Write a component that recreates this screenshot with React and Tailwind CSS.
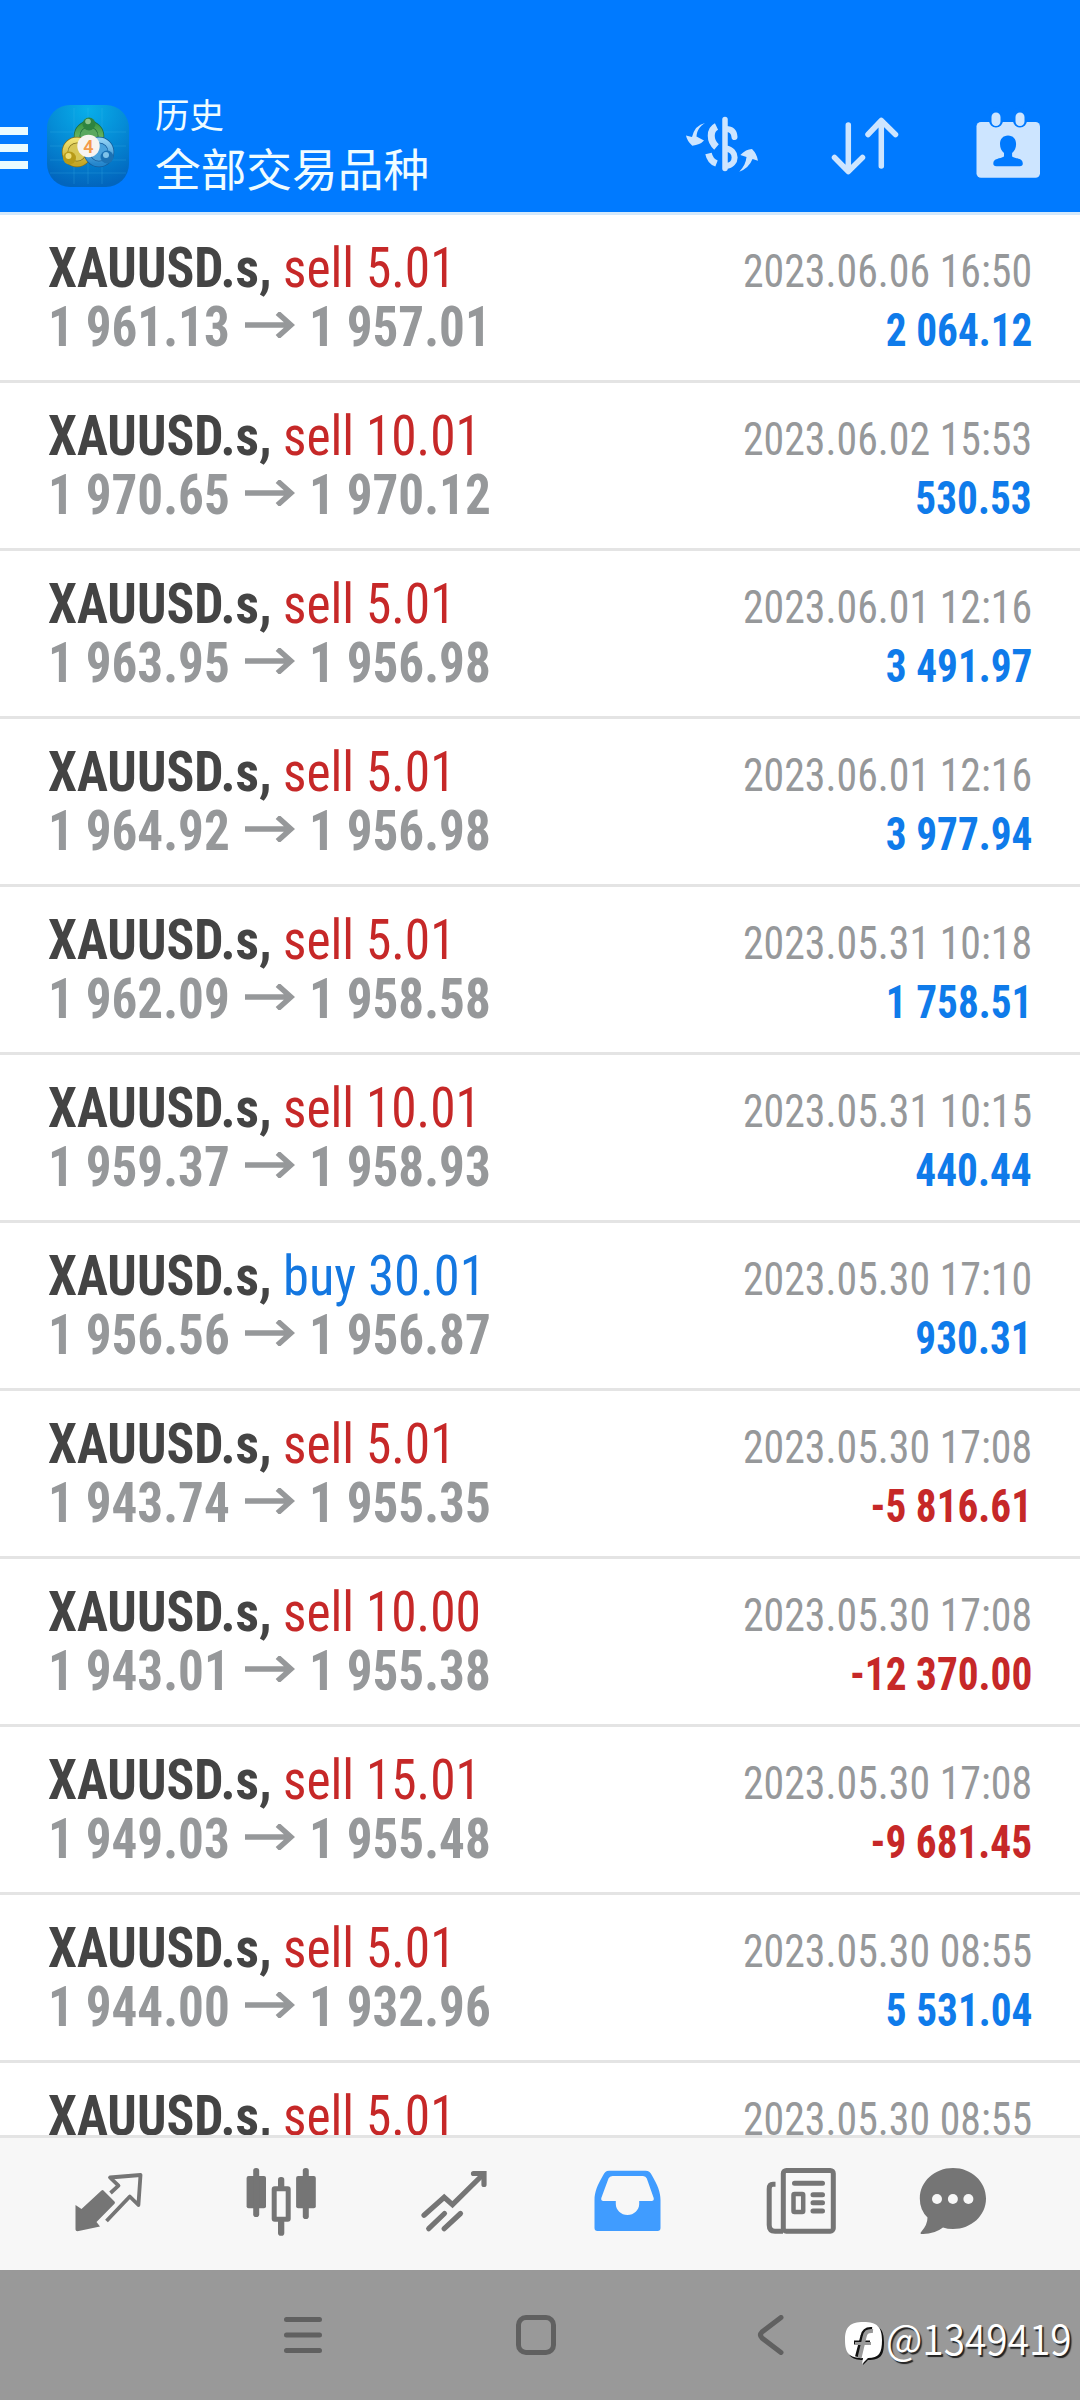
import React from 'react';

const deals = [
  { side: 'sell', volume: '5.01', open: '1 961.13', close: '1 957.01', time: '2023.06.06 16:50', profit: '2 064.12' },
  { side: 'sell', volume: '10.01', open: '1 970.65', close: '1 970.12', time: '2023.06.02 15:53', profit: '530.53' },
  { side: 'sell', volume: '5.01', open: '1 963.95', close: '1 956.98', time: '2023.06.01 12:16', profit: '3 491.97' },
  { side: 'sell', volume: '5.01', open: '1 964.92', close: '1 956.98', time: '2023.06.01 12:16', profit: '3 977.94' },
  { side: 'sell', volume: '5.01', open: '1 962.09', close: '1 958.58', time: '2023.05.31 10:18', profit: '1 758.51' },
  { side: 'sell', volume: '10.01', open: '1 959.37', close: '1 958.93', time: '2023.05.31 10:15', profit: '440.44' },
  { side: 'buy', volume: '30.01', open: '1 956.56', close: '1 956.87', time: '2023.05.30 17:10', profit: '930.31' },
  { side: 'sell', volume: '5.01', open: '1 943.74', close: '1 955.35', time: '2023.05.30 17:08', profit: '-5 816.61' },
  { side: 'sell', volume: '10.00', open: '1 943.01', close: '1 955.38', time: '2023.05.30 17:08', profit: '-12 370.00' },
  { side: 'sell', volume: '15.01', open: '1 949.03', close: '1 955.48', time: '2023.05.30 17:08', profit: '-9 681.45' },
  { side: 'sell', volume: '5.01', open: '1 944.00', close: '1 932.96', time: '2023.05.30 08:55', profit: '5 531.04' },
  { side: 'sell', volume: '5.01', open: '', close: '', time: '2023.05.30 08:55', profit: '' },
];

const AppLogo = () => (
  <svg viewBox="0 0 82 82" className="w-[82px] h-[82px]">
    <defs>
      <radialGradient id="tile" cx="50%" cy="5%" r="95%">
        <stop offset="0" stopColor="#08aeea" />
        <stop offset="0.5" stopColor="#058cd6" />
        <stop offset="1" stopColor="#0265bd" />
      </radialGradient>
      <linearGradient id="green" x1="0" y1="0" x2="0" y2="1">
        <stop offset="0" stopColor="#3d9a45" />
        <stop offset="1" stopColor="#8cc976" />
      </linearGradient>
      <linearGradient id="yellow" x1="0" y1="0" x2="0" y2="1">
        <stop offset="0" stopColor="#f0e272" />
        <stop offset="1" stopColor="#c4a626" />
      </linearGradient>
      <linearGradient id="blue" x1="0" y1="0" x2="0" y2="1">
        <stop offset="0" stopColor="#8fd0f3" />
        <stop offset="1" stopColor="#2586cc" />
      </linearGradient>
    </defs>
    <rect width="82" height="82" rx="23" fill="url(#tile)" />
    <path d="M27 3v76M41 3v76M55 3v76M3 27h76M3 41h76M3 55h76M3 68h76" stroke="#4cc0ee" strokeOpacity="0.28" strokeWidth="0.8" />
    <circle cx="42" cy="31" r="12" fill="#5aa860" stroke="#1d6a3c" strokeWidth="6.500" />
    <circle cx="42" cy="31" r="12" fill="none" stroke="url(#green)" strokeWidth="5" />
    <circle cx="30" cy="47" r="12" fill="#d8c654" stroke="#80711c" strokeWidth="6.500" />
    <circle cx="30" cy="47" r="12" fill="none" stroke="url(#yellow)" strokeWidth="5" />
    <circle cx="52" cy="47" r="12" fill="#4ba3dd" stroke="#155c9b" strokeWidth="6.500" />
    <circle cx="52" cy="47" r="12" fill="none" stroke="url(#blue)" strokeWidth="5" />
    <circle cx="42" cy="19" r="6.500" fill="#2e8440" />
    <circle cx="41" cy="16.500" r="2.800" fill="#8cc48c" />
    <circle cx="22.500" cy="53" r="6.500" fill="#b79a17" />
    <circle cx="21.500" cy="51" r="3" fill="#eedd74" />
    <circle cx="60" cy="52" r="6.500" fill="#1b72b5" />
    <circle cx="59" cy="50" r="3" fill="#7fc3ea" />
    <circle cx="41.500" cy="41" r="11.200" fill="#f7f4f1" />
    <text x="41.500" y="47.500" textAnchor="middle" fontFamily="Roboto" fontSize="18" fontWeight="600" fill="#f39a4a">4</text>
  </svg>
);

const CurrencyIcon = () => (
  <svg viewBox="0 0 84 80" className="w-[84px] h-[80px]" fill="none" stroke="#cde5ff">
    <path d="M25 18C20 21 17 25 16.500 31.500L24 35.500Q20 40 12.300 40.700Q7 36 6 30.500L12 32Q15 20 25 18Z" fill="#cde5ff" stroke="none" />
    <path d="M36.500 21.500C29.500 25 29.500 36 36.500 42" strokeWidth="7" />
    <path d="M28.500 48.500Q30 56 36.500 58.500" strokeWidth="6.500" />
    <path d="M45 14.500v49" strokeWidth="5.500" strokeLinecap="round" />
    <path d="M46 24Q54 24 54.500 32" strokeWidth="6" strokeLinecap="round" />
    <path d="M46 43.500C57.500 45 57.500 60 46 61" strokeWidth="6" />
    <path d="M59.300 66.700C64 62 66 57 66.500 52L60.300 50Q66 44 72 44Q77 49 78 55.700L72.500 54Q69 63 59.300 66.700Z" fill="#cde5ff" stroke="none" />
  </svg>
);

const SortIcon = () => (
  <svg viewBox="0 0 84 80" className="w-[84px] h-[80px]" fill="none" stroke="#cde5ff" strokeWidth="5.500" strokeLinecap="round" strokeLinejoin="round">
    <path d="M26.300 20v46M12.500 52.500L26.300 66.500L40.500 52.500" />
    <path d="M59.300 61V15.500M46 29.500L59.300 15.500L73.500 29.500" />
  </svg>
);

const CalendarIcon = () => (
  <svg viewBox="0 0 80 80" className="w-[80px] h-[80px]">
    <rect x="6.500" y="17" width="63.500" height="55.700" rx="4.500" fill="#cde5ff" />
    <path d="M26 9v6.500M50 9v6.500" stroke="#007aff" strokeWidth="14" strokeLinecap="round" />
    <path d="M26 12v4.500M50 12v4.500" stroke="#cde5ff" strokeWidth="9" strokeLinecap="round" />
    <path d="M38 30.500c-5 0-8 3.500-8 8.500 0 4 1.500 7 4 9v3.500c-4 2.500-10.700 1.500-10.700 7 0 2 1 2.700 3 2.700h23.500c2 0 3-.7 3-2.700 0-5.500-6.700-4.500-10.700-7V48c2.500-2 4-5 4-9 0-5-3-8.500-8.100-8.500Z" fill="#007aff" />
  </svg>
);

const TABS = [
  <g key="quotes">
    <path d="M3.500 40L9.500 44L29.500 25.500Q30.500 24.500 31.500 25.500L42.500 36.500Q43.500 37.700 42.500 38.700L24.500 57L28 61.500L5.500 66.300Q3.500 66.300 3.500 64.500Z" fill="#757575" />
    <path d="M38.500 28L46.500 20.700L38 12.500L68.500 10L66.400 40L57.800 31.500L34.500 56" fill="none" stroke="#757575" strokeWidth="3.800" strokeLinejoin="round" />
  </g>,
  <g key="chart" fill="#757575">
    <rect x="1.600" y="11" width="19.400" height="32.300" rx="2" />
    <rect x="8.200" y="3" width="6" height="49" rx="2.800" />
    <rect x="33" y="12" width="6.300" height="14" rx="2.800" />
    <rect x="33" y="54" width="6.300" height="16.700" rx="2.800" />
    <rect x="29.200" y="23.800" width="14" height="30.500" rx="0.500" fill="none" stroke="#757575" strokeWidth="5" />
    <rect x="51.100" y="11" width="19.700" height="32.300" rx="2" />
    <rect x="57.800" y="3" width="6" height="51" rx="2.800" />
  </g>,
  <g key="trade" fill="none" stroke="#757575" strokeWidth="5.200" strokeLinecap="round">
    <path d="M6 50.300L26.200 32.200L34.500 39.700L65 9.500" />
    <path d="M55.500 8.500H66V19.500" />
    <path d="M10.700 63.700L26.500 48.500M26.200 63.700L42.500 48.500" />
  </g>,
  <path key="history" fillRule="evenodd" fill="#409cff" d="M17 5.700H53.500C57 5.700 58.500 7.500 60 10.500C65.500 20 68.500 27 68.500 35V63Q68.500 66 65.500 66H5.500Q2.500 66 2.500 63V35C2.500 27 5.500 20 11 10.500C12.500 7.500 14 5.700 17 5.700ZM20.500 11Q17.500 11 16.500 13.500L9.300 33Q8.700 36 11.500 36H23.800V39C23.800 45 29 50 35.500 50S47.200 45 47.200 39V36H59.500Q62.300 36 61.700 33L54.800 13.500Q53.800 11 51 11Z" />,
  <g key="news" fill="none" stroke="#757575">
    <rect x="18.300" y="5.500" width="50" height="60.700" rx="3" strokeWidth="5" />
    <path d="M10.500 19.300H8Q4.200 19.300 4.200 24V60Q4.200 66.200 10 66.200H18" strokeWidth="5" />
    <path d="M29.500 18.300H57.500M48 29.700H57.500M48 37.700H57.500M48 46H57.500" strokeWidth="5" strokeLinecap="round" />
    <rect x="28.500" y="29" width="9.700" height="18" rx="1" strokeWidth="4.500" />
  </g>,
  <g key="chat">
    <path d="M36 3C54.500 3 69 16.500 69 33.500S54.500 64 36 64Q30.500 64 26 62.500Q17 69.500 4.500 69Q2.500 68.700 4.500 66.500Q10.500 59.500 10.500 52.500Q2.800 45 2.800 33.500C2.800 16.500 17.500 3 36 3Z" fill="#757575" />
    <circle cx="20" cy="34" r="5" fill="#f7f7f7" />
    <circle cx="35.900" cy="34" r="5" fill="#f7f7f7" />
    <circle cx="51.400" cy="34" r="5" fill="#f7f7f7" />
  </g>,
];

// Space after each tab icon
const TAB_GAPS = ['mr-[101px]', 'mr-[101px]', 'mr-[102px]', 'mr-[101px]', 'mr-[80px]', 'mr-0'];

const DealRow = ({ deal }) => (
  <div className="h-[168px] shrink-0 border-b-[3px] border-[#e4e4e4] flex justify-between px-[48px] font-[Roboto] [font-stretch:75%] whitespace-pre">
    <div className="pt-[24px] text-[55px] leading-[59px]">
      <div className="flex">
        <div className="w-[235px]">
          <span className="inline-block origin-left scale-x-[.94] font-bold text-[#444444]">XAUUSD.s,</span>
        </div>
        <span className={`inline-block origin-left font-[440] ${deal.side === 'buy' ? 'scale-x-[.954] text-[#1477e0]' : 'scale-x-[.934] text-[#c62828]'}`}>
          {deal.side} {deal.volume}
        </span>
      </div>
      {deal.open && (
        <div className="flex items-center font-bold text-[#96989a]">
          <div className="w-[197px]">
            <span className="inline-block origin-left scale-x-[.93]">{deal.open}</span>
          </div>
          <svg viewBox="0 0 50 26" className="w-[50px] h-[26px] mb-[6px]" fill="none" stroke="#96989a" strokeWidth="5.500">
            <path d="M0 13H47M32.500 1L46 13L32.500 25" />
          </svg>
          <span className="inline-block origin-left scale-x-[.93] ml-[14px]">{deal.close}</span>
        </div>
      )}
    </div>
    <div className="pt-[27px] text-[46px] leading-[59px] flex flex-col items-end">
      <span className="origin-right scale-x-[.909] font-[440] text-[#96989a]">{deal.time}</span>
      <span className={`origin-right scale-x-[.897] font-bold ${deal.profit.startsWith('-') ? 'text-[#c62828]' : 'text-[#0f7bea]'}`}>
        {deal.profit}
      </span>
    </div>
  </div>
);

export default function App() {
  return (
    <div className="w-[1080px] h-[2400px] flex flex-col bg-white overflow-hidden">
      <header className="h-[215px] shrink-0 bg-[#007aff] border-b-[3px] border-[#d5e9fb] flex">
        <div className="mt-[127px] flex flex-col gap-[9px]">
          <div className="w-[28px] h-[8px] bg-[#e9fbff]"></div>
          <div className="w-[28px] h-[8px] bg-[#e9fbff]"></div>
          <div className="w-[28px] h-[8px] bg-[#e9fbff]"></div>
        </div>
        <div className="mt-[105px] ml-[19px]">
          <AppLogo />
        </div>
        <div className="ml-[26px] mt-[90px] text-[#effcff] font-['Noto_Sans_CJK_SC',sans-serif]">
          <div className="text-[34.500px] leading-[46px]">历史</div>
          <div className="text-[45.700px] leading-[62px]">全部交易品种</div>
        </div>
        <div className="ml-auto mt-[105px] pr-[30px] flex">
          <CurrencyIcon />
          <div className="ml-[58px]">
            <SortIcon />
          </div>
          <div className="ml-[64px]">
            <CalendarIcon />
          </div>
        </div>
      </header>

      <main className="flex-1 min-h-0 overflow-hidden flex flex-col">
        {deals.map((deal, i) => (
          <DealRow key={i} deal={deal} />
        ))}
      </main>

      <nav className="h-[135px] shrink-0 bg-[#f7f7f7] border-t-[3px] border-[#e4e4e4] flex pl-[72px] pt-[27px]">
        {TABS.map((icon, i) => (
          <svg key={i} viewBox="0 0 72 72" className={`w-[72px] h-[72px] shrink-0 ${TAB_GAPS[i]}`}>
            {icon}
          </svg>
        ))}
      </nav>

      {/* System navigation */}
      <footer className="h-[130px] shrink-0 bg-[#999999] flex items-start">
        <svg viewBox="0 0 40 40" className="w-[40px] h-[40px] shrink-0 ml-[283px] mt-[45px]" stroke="#606060" strokeWidth="5" strokeLinecap="round">
          <path d="M3.500 4.500H36.500M3.500 20H36.500M3.500 35.500H36.500" />
        </svg>
        <div className="w-[40px] h-[40px] shrink-0 ml-[193px] mt-[45px] rounded-[10px] border-[5px] border-[#606060]"></div>
        <svg viewBox="0 0 28 40" className="w-[28px] h-[40px] shrink-0 ml-[201px] mt-[45px]" fill="none" stroke="#606060" strokeWidth="5" strokeLinecap="round">
          <path d="M24 2.500L5 17Q2 20 5 23L24 37.500" />
        </svg>
        <svg viewBox="0 0 40 44" className="w-[40px] h-[44px] shrink-0 ml-[60px] mt-[52px]">
          <path d="M20 2C34 2 39 7 39 20S36 38 23 38L18 43L19 38C5 38 2 33 2 20S6 2 20 2Z" fill="#111" />
          <path d="M18.500 0C32 0 37 5 37 18S34 36 23 36L17 42L18 36C4 36 0 31 0 18S5 0 18.500 0Z" fill="#fff" />
          <path d="M27 7.500C21 7 19 9 18 14L12.500 35" fill="none" stroke="#111" strokeWidth="5" />
          <path d="M9 20.500H25" fill="none" stroke="#111" strokeWidth="4" />
          <path d="M28 9C22 8.500 20.500 10.500 19.500 15L14.500 36" fill="none" stroke="#999" strokeWidth="4" />
          <path d="M10 21.500H26" fill="none" stroke="#999" strokeWidth="3" />
        </svg>
        <span className="shrink-0 ml-[1px] mt-[37px] origin-left scale-x-[.925] text-[42px] leading-[60px] font-[350] text-white font-['Noto_Sans_CJK_SC',sans-serif] [text-shadow:2px_2px_1px_#222]">
          @1349419
        </span>
      </footer>
    </div>
  );
}
